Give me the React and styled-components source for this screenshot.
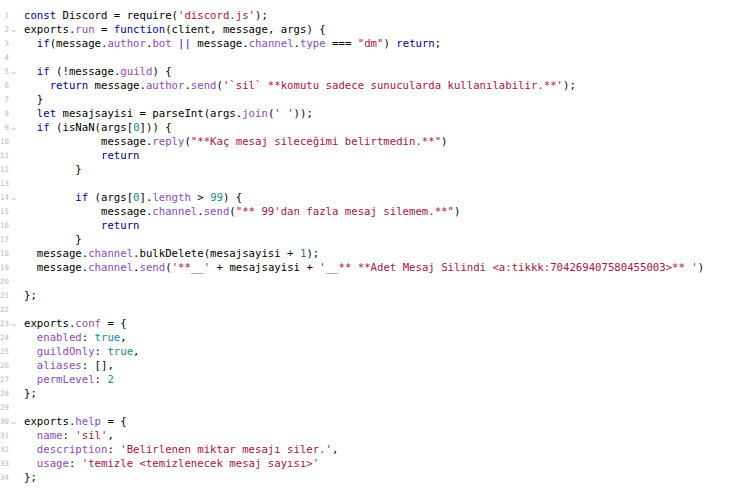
import React from 'react'
import styled, { createGlobalStyle } from 'styled-components'

const GlobalStyle = createGlobalStyle`
  html, body {
    margin: 0;
    background: #fff;
  }
`

const KEYWORDS = ['const', 'function', 'if', 'return', 'let']
const PLAIN_PROPS = ['bulkDelete']

const SOURCE = [
  `const Discord = require('discord.js');`,
  `exports.run = function(client, message, args) {`,
  `  if(message.author.bot || message.channel.type === "dm") return;`,
  ``,
  `  if (!message.guild) {`,
  "    return message.author.send('`sil` **komutu sadece sunucularda kullanılabilir.**');",
  `  }`,
  `  let mesajsayisi = parseInt(args.join(' '));`,
  `  if (isNaN(args[0])) {`,
  `            message.reply("**Kaç mesaj sileceğimi belirtmedin.**")`,
  `            return`,
  `        }`,
  ``,
  `        if (args[0].length > 99) {`,
  `            message.channel.send("** 99'dan fazla mesaj silemem.**")`,
  `            return`,
  `        }`,
  `  message.channel.bulkDelete(mesajsayisi + 1);`,
  `  message.channel.send('**__' + mesajsayisi + '__** **Adet Mesaj Silindi <a:tikkk:704269407580455003>** ')`,
  ``,
  `};`,
  ``,
  `exports.conf = {`,
  `  enabled: true,`,
  `  guildOnly: true,`,
  `  aliases: [],`,
  `  permLevel: 2`,
  `};`,
  ``,
  `exports.help = {`,
  `  name: 'sil',`,
  `  description: 'Belirlenen miktar mesajı siler.',`,
  `  usage: 'temizle <temizlenecek mesaj sayısı>'`,
  `};`,
]

const FOLDS = [2, 5, 9, 14, 23, 30]

// tiny js highlighter, just enough for this snippet
const tokenize = (line) => {
  const out = []
  const re = /('[^']*'|"[^"]*"|`[^`]*`|\b\d+\b|\btrue\b|\|\||[A-Za-z_$][\w$]*|\s+|.)/g
  let m
  let prev = ''
  while ((m = re.exec(line))) {
    const t = m[0]
    const rest = line.slice(re.lastIndex)
    let kind = 'plain'
    if (/^['"`]/.test(t)) kind = 'string'
    else if (/^\d/.test(t) || t === 'true') kind = 'number'
    else if (t === '||') kind = 'op'
    else if (KEYWORDS.includes(t)) kind = 'keyword'
    else if (/^[A-Za-z_$]/.test(t) && prev === '.' && !PLAIN_PROPS.includes(t)) kind = 'prop'
    else if (/^[A-Za-z_$]/.test(t) && /^:/.test(rest)) kind = 'prop'
    out.push([kind, t])
    if (!/^\s+$/.test(t)) prev = t
  }
  return out
}

const colors = {
  plain: '#000000',
  keyword: '#00008f',
  prop: '#8b4cb3',
  string: '#a3163f',
  number: '#17878f',
  op: '#1515f0',
}

const Editor = styled.div`
  padding-top: 9px;
  font-family: 'DejaVu Sans Mono', 'Liberation Mono', monospace;
  font-size: 10.66px;
  line-height: 14px;
  overflow: hidden;
`

const Row = styled.div`
  display: flex;
  height: 14px;
`

const Gutter = styled.div`
  width: 24px;
  flex: none;
  display: flex;
  align-items: center;
`

const LineNo = styled.span`
  width: 9px;
  flex: none;
  text-align: right;
  font-size: 7.4px;
  color: #b9b9b9;
  white-space: nowrap;
`

const Fold = styled.svg`
  margin-left: 2px;
  margin-top: 2px;
  visibility: ${(p) => (p.$on ? 'visible' : 'hidden')};
`

const Code = styled.pre`
  margin: 0;
  font: inherit;
  white-space: pre;
  color: #000;
`

const Token = styled.span`
  color: ${(p) => colors[p.$kind]};
`

const App = () => (
  <>
    <GlobalStyle />
    <Editor>
      {SOURCE.map((line, i) => (
        <Row key={i}>
          <Gutter>
            <LineNo>{i + 1}</LineNo>
            <Fold $on={FOLDS.includes(i + 1)} width="5" height="4" viewBox="0 0 5 4">
              <path d="M0.5 1 L2.5 3 L4.5 1" fill="none" stroke="#b0b0b0" strokeWidth="0.9" />
            </Fold>
          </Gutter>
          <Code>
            {tokenize(line).map(([kind, text], j) => (
              <Token key={j} $kind={kind}>
                {text}
              </Token>
            ))}
          </Code>
        </Row>
      ))}
    </Editor>
  </>
)

export default App
